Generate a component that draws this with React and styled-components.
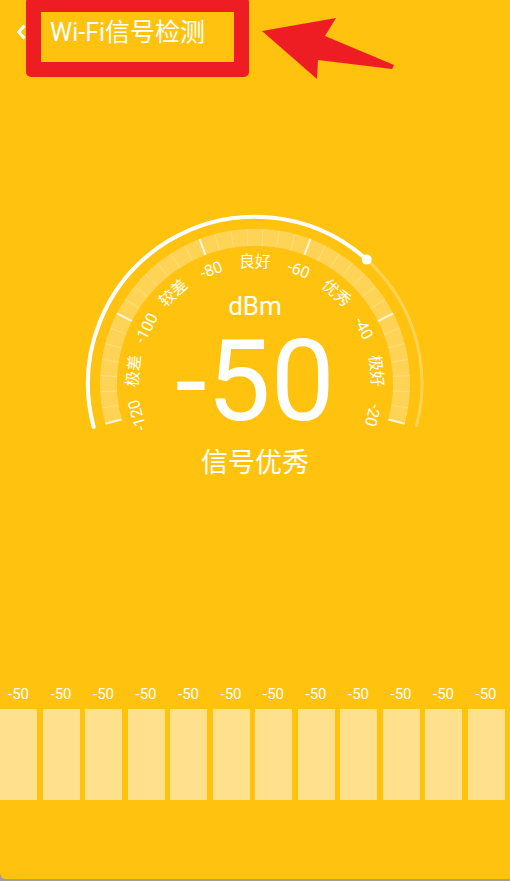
import React from "react";
import styled, { createGlobalStyle } from "styled-components";

const GlobalStyle = createGlobalStyle`
  html, body {
    margin: 0;
    padding: 0;
    background: #9e9e9e;
  }
  body {
    font-family: Roboto, "Noto Sans CJK SC", sans-serif;
  }
`;

const YELLOW = "#FFC20E";

const Screen = styled.div`
  width: 510px;
  height: 879px;
  background: ${YELLOW};
  border-bottom-left-radius: 6px;
  display: flex;
  flex-direction: column;
  overflow: hidden;
  color: #fff;
`;

const Header = styled.div`
  position: relative;
  height: 64px;
  display: flex;
  align-items: center;
  gap: 24px;
  padding-left: 17px;
  flex-shrink: 0;
`;

const Title = styled.div`
  font-size: 25px;
  line-height: 30px;
  margin-top: 2px;
  white-space: nowrap;
`;

const MarkBox = styled.div`
  position: absolute;
  left: 26px;
  top: -3px;
  width: 223px;
  height: 80px;
  box-sizing: border-box;
  border: 15px solid #ee1d24;
  border-radius: 5px;
`;

const MarkArrow = styled.svg`
  position: absolute;
  left: 0;
  top: 0;
  overflow: visible;
`;

const Gauge = styled.div`
  position: relative;
  width: 340px;
  height: 290px;
  margin: 136px auto 0;
  display: flex;
  flex-direction: column;
  align-items: center;
  padding-top: 91px;
  box-sizing: border-box;
`;

const Dial = styled.svg`
  position: absolute;
  left: 0;
  top: 0;
`;

const Unit = styled.div`
  position: relative;
  font-size: 26px;
  line-height: 30px;
`;

const Value = styled.div`
  position: relative;
  font-size: 114px;
  line-height: 100px;
  margin-top: 10px;
`;

const Level = styled.div`
  position: relative;
  font-size: 27px;
  line-height: 34px;
  margin-top: 15px;
`;

const BarsRow = styled.div`
  display: grid;
  grid-template-columns: repeat(12, 42.5px);
  margin-top: 194px;
`;

const Cell = styled.div`
  display: flex;
  flex-direction: column;
  gap: 5px;
`;

const BarLabel = styled.div`
  width: 37px;
  text-align: center;
  font-size: 15px;
  line-height: 20px;
`;

const Bar = styled.div`
  width: 37px;
  height: 91px;
  background: #ffe08c;
`;

// dial geometry (local to the Gauge box)
const CX = 170;
const CY = 183.7;
const START = 165;
const SWEEP = 210;
const MIN = -120;
const MAX = -20;

const rad = (d) => (d * Math.PI) / 180;
const pt = (r, deg) => [CX + r * Math.cos(rad(deg)), CY + r * Math.sin(rad(deg))];
const arcPath = (r, a0, a1) => {
  const [x0, y0] = pt(r, a0);
  const [x1, y1] = pt(r, a1);
  const large = a1 - a0 > 180 ? 1 : 0;
  return `M${x0} ${y0} A${r} ${r} 0 ${large} 1 ${x1} ${y1}`;
};
const angleOf = (v) => START + ((v - MIN) / (MAX - MIN)) * SWEEP;

const labels = [
  "-120", "极差", "-100", "较差", "-80", "良好", "-60", "优秀", "-40", "极好", "-20",
];

function DialFace({ value }) {
  const valueAngle = angleOf(value);
  const ticks = [];
  for (let i = 0; i <= 35; i++) {
    const a = START + i * 6;
    const major = i % 7 === 0;
    const [x0, y0] = pt(138, a);
    const [x1, y1] = pt(155, a);
    ticks.push(
      <line
        key={i}
        x1={x0}
        y1={y0}
        x2={x1}
        y2={y1}
        stroke={major ? "rgba(255,255,255,0.8)" : "rgba(255,255,255,0.22)"}
        strokeWidth={major ? 2 : 1}
      />
    );
  }
  const [dx, dy] = pt(167, valueAngle);

  return (
    <Dial width="340" height="290" viewBox="0 0 340 290">
      <path d={arcPath(146.5, START, START + SWEEP)} fill="none" stroke="rgba(255,255,255,0.3)" strokeWidth="17" />
      {ticks}
      <path d={arcPath(167, START, START + SWEEP)} fill="none" stroke="rgba(255,255,255,0.3)" strokeWidth="3" />
      <path d={arcPath(167, START, valueAngle)} fill="none" stroke="#fff" strokeWidth="4" strokeLinecap="round" />
      <circle cx={dx} cy={dy} r="5" fill="#fff" />
      {labels.map((t, i) => {
        const a = START + i * 21;
        const [x, y] = pt(122, a);
        return (
          <text
            key={t}
            x={x}
            y={y}
            fill="#fff"
            fontSize="16"
            fontFamily='Roboto, "Noto Sans CJK SC", sans-serif'
            textAnchor="middle"
            dominantBaseline="central"
            transform={`rotate(${a + 90} ${x} ${y})`}
          >
            {t}
          </text>
        );
      })}
    </Dial>
  );
}

export default function App() {
  const value = -50;
  const history = Array.from({ length: 12 }, () => -50);

  return (
    <>
      <GlobalStyle />
      <Screen>
        <Header>
          <svg width="9" height="16" viewBox="0 0 9 16">
            <path d="M7.5 1.5 L1.8 8 L7.5 14.5" fill="none" stroke="#fff" strokeWidth="3" />
          </svg>
          <Title>Wi-Fi信号检测</Title>
          <MarkBox />
          <MarkArrow width="510" height="90">
            <polygon
              points="262,31 336,18 325,36 394,65 392,69 318,60 317,79"
              fill="#ee1d24"
            />
          </MarkArrow>
        </Header>

        <Gauge>
          <DialFace value={value} />
          <Unit>dBm</Unit>
          <Value>{value}</Value>
          <Level>信号优秀</Level>
        </Gauge>

        <BarsRow>
          {history.map((v, i) => (
            <Cell key={i}>
              <BarLabel>{v}</BarLabel>
              <Bar />
            </Cell>
          ))}
        </BarsRow>
      </Screen>
    </>
  );
}
